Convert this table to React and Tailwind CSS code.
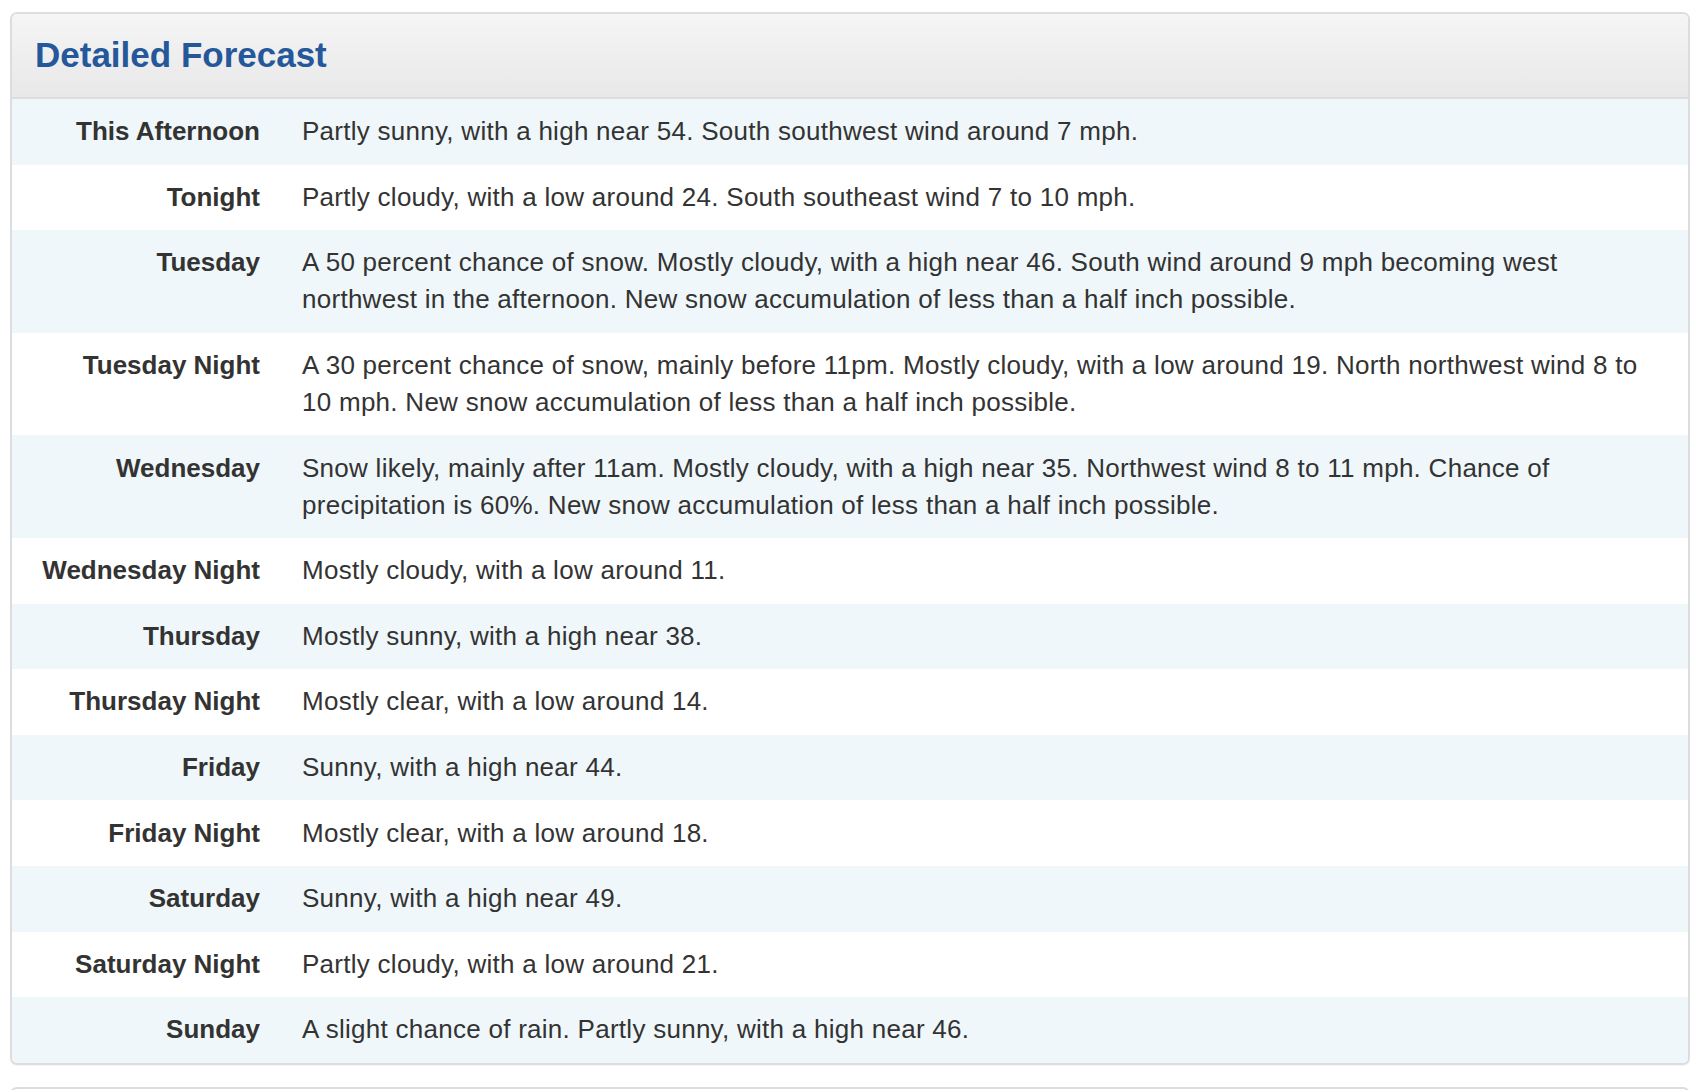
import React from "react";

const rows = [
  ["This Afternoon", "Partly sunny, with a high near 54. South southwest wind around 7 mph."],
  ["Tonight", "Partly cloudy, with a low around 24. South southeast wind 7 to 10 mph."],
  ["Tuesday", "A 50 percent chance of snow. Mostly cloudy, with a high near 46. South wind around 9 mph becoming west northwest in the afternoon. New snow accumulation of less than a half inch possible."],
  ["Tuesday Night", "A 30 percent chance of snow, mainly before 11pm. Mostly cloudy, with a low around 19. North northwest wind 8 to 10 mph. New snow accumulation of less than a half inch possible."],
  ["Wednesday", "Snow likely, mainly after 11am. Mostly cloudy, with a high near 35. Northwest wind 8 to 11 mph. Chance of precipitation is 60%. New snow accumulation of less than a half inch possible."],
  ["Wednesday Night", "Mostly cloudy, with a low around 11."],
  ["Thursday", "Mostly sunny, with a high near 38."],
  ["Thursday Night", "Mostly clear, with a low around 14."],
  ["Friday", "Sunny, with a high near 44."],
  ["Friday Night", "Mostly clear, with a low around 18."],
  ["Saturday", "Sunny, with a high near 49."],
  ["Saturday Night", "Partly cloudy, with a low around 21."],
  ["Sunday", "A slight chance of rain. Partly sunny, with a high near 46."],
];

export default function App() {
  return (
    <div
      className="w-[1700px] h-[1090px] bg-white overflow-hidden pt-[12px] px-[10px]"
      style={{ fontFamily: '"Liberation Sans", Arial, Helvetica, sans-serif' }}
    >
      <div className="w-[1680px] border-2 border-[#dddddd] rounded-[7px] overflow-hidden shadow-[0_1px_1px_rgba(0,0,0,0.05)]">
        <div className="h-[85px] bg-gradient-to-b from-[#f5f5f5] to-[#e8e8e8] border-b-2 border-[#dddddd] flex items-center pl-[23px] pb-[2px]">
          <h1 className="text-[35px] font-bold text-[#25589a] leading-none">Detailed Forecast</h1>
        </div>
        <div>
          {rows.map(([label, text], i) => (
            <div
              key={label}
              className={`flex text-[26px] leading-[37px] text-[#333333] ${i % 2 === 0 ? "bg-[#eff7fa]" : "bg-white"}`}
            >
              <div className="w-[270px] shrink-0 text-right font-bold pr-[22px] py-[14.3px]">{label}</div>
              <div className="flex-1 pl-[20px] pr-[20px] py-[14.3px] tracking-[0.27px]">{text}</div>
            </div>
          ))}
        </div>
      </div>
      <div className="mt-[22px] w-[1680px] h-[20px] border-2 border-[#dddddd] rounded-[7px] bg-white"></div>
    </div>
  );
}
